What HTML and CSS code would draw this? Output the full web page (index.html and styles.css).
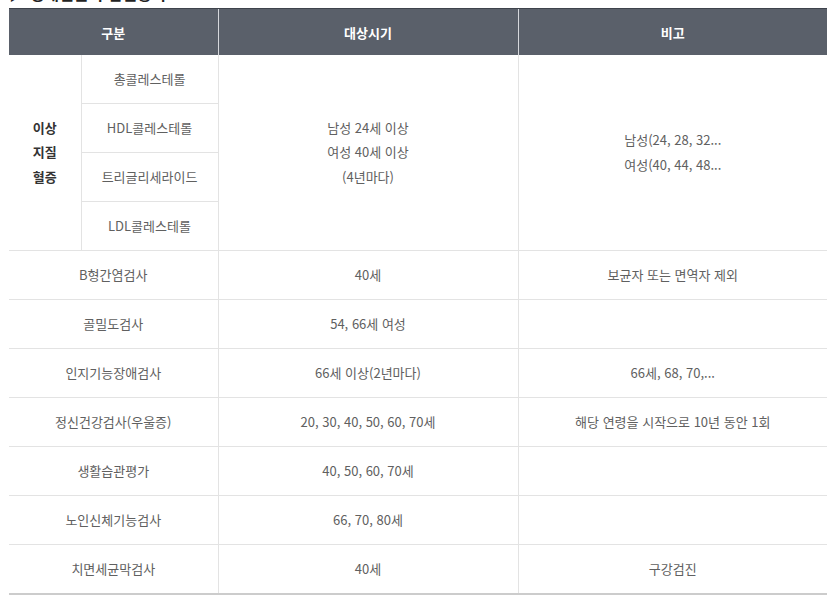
FILE: index.html
```html
<!DOCTYPE html>
<html lang="ko">
<head>
<meta charset="utf-8">
<link rel="stylesheet" href="styles.css">
</head>
<body>
<div class="title"><span>▶ 생애전환기 검진항목</span></div>
<table class="exam">
  <colgroup>
    <col class="c1"><col class="c2"><col class="c3"><col class="c4">
  </colgroup>
  <thead>
    <tr><th colspan="2">구분</th><th>대상시기</th><th>비고</th></tr>
  </thead>
  <tbody>
    <tr>
      <td rowspan="4" class="group">이상<br>지질<br>혈증</td>
      <td class="sub">총콜레스테롤</td>
      <td rowspan="4" class="multi">남성 24세 이상<br>여성 40세 이상<br>(4년마다)</td>
      <td rowspan="4" class="multi">남성(24, 28, 32...<br>여성(40, 44, 48...</td>
    </tr>
    <tr><td class="sub">HDL콜레스테롤</td></tr>
    <tr><td class="sub">트리글리세라이드</td></tr>
    <tr><td class="sub">LDL콜레스테롤</td></tr>
    <tr><td colspan="2" class="name">B형간염검사</td><td>40세</td><td>보균자 또는 면역자 제외</td></tr>
    <tr><td colspan="2" class="name">골밀도검사</td><td>54, 66세 여성</td><td></td></tr>
    <tr><td colspan="2" class="name">인지기능장애검사</td><td>66세 이상(2년마다)</td><td>66세, 68, 70,...</td></tr>
    <tr><td colspan="2" class="name">정신건강검사(우울증)</td><td>20, 30, 40, 50, 60, 70세</td><td>해당 연령을 시작으로 10년 동안 1회</td></tr>
    <tr><td colspan="2" class="name">생활습관평가</td><td>40, 50, 60, 70세</td><td></td></tr>
    <tr><td colspan="2" class="name">노인신체기능검사</td><td>66, 70, 80세</td><td></td></tr>
    <tr class="last"><td colspan="2" class="name">치면세균막검사</td><td>40세</td><td>구강검진</td></tr>
  </tbody>
</table>
</body>
</html>
```

FILE: styles.css
```css
html, body {
  margin: 0;
  padding: 0;
  background: #ffffff;
}

body {
  font-family: "Noto Sans CJK KR", "Noto Sans", sans-serif;
  color: #606060;
}

.title {
  height: 8px;
  overflow: hidden;
  padding-left: 9px;
  display: flex;
  align-items: flex-end;
}

.title span {
  display: block;
  font-size: 16px;
  font-weight: 700;
  color: #222;
  line-height: 20px;
  margin-bottom: -1px;
  transform: translateY(-6px);
}

.exam {
  margin-left: 9px;
  width: 818px;
  table-layout: fixed;
  border-collapse: collapse;
  font-size: 13px;
}

.c1 { width: 72px; }
.c2 { width: 137px; }
.c3 { width: 300px; }
.c4 { width: 309px; }

.exam th {
  background: #5a606a;
  color: #ffffff;
  font-weight: 700;
  font-size: 13px;
  height: 46px;
  padding: 0;
  border-top: 1px solid #3e434c;
  border-left: 1px solid #d6d8dc;
  text-align: center;
  vertical-align: middle;
}

.exam th:first-child {
  border-left: none;
}

.exam td {
  height: 48px;
  padding: 0;
  text-align: center;
  vertical-align: middle;
  border-bottom: 1px solid #e3e3e3;
  border-left: 1px solid #e3e3e3;
  line-height: 24.5px;
}

.exam td.group,
.exam td.name {
  border-left: none;
}

.exam td.group {
  color: #333333;
  font-weight: 700;
}

.exam tr.last td {
  border-bottom: 2px solid #cccccc;
}
```
